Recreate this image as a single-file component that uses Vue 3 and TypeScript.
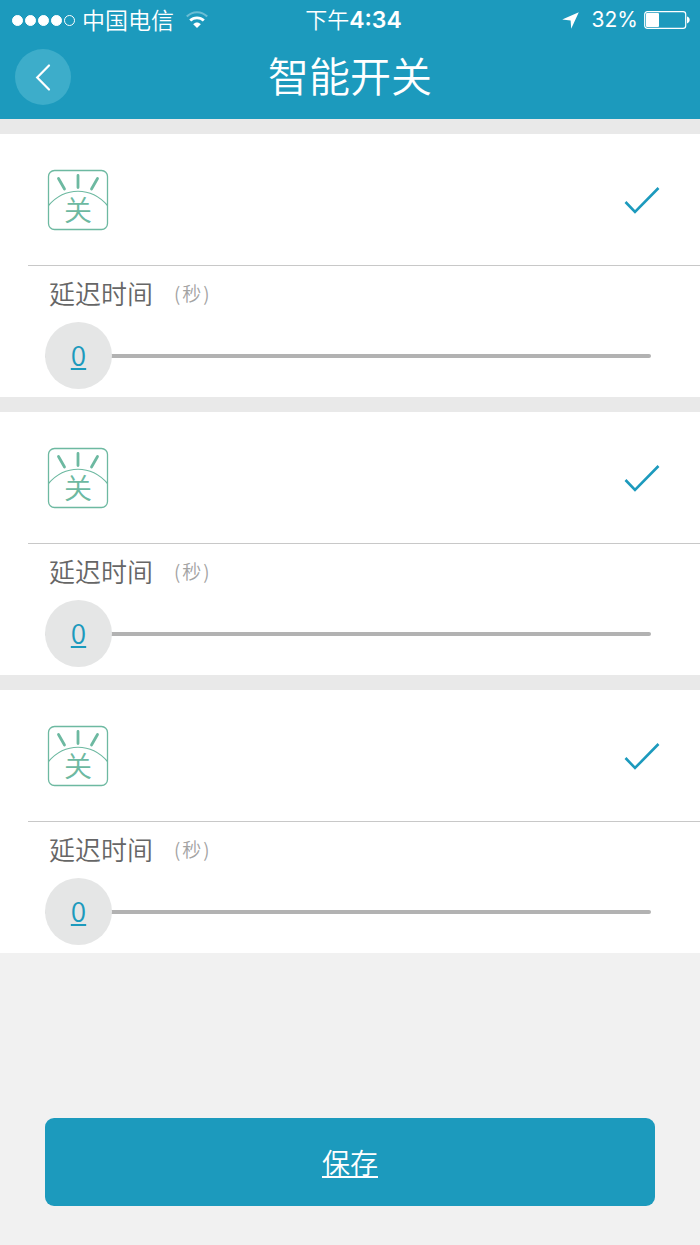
<script setup lang="ts">
import { ref } from 'vue'

interface SwitchItem {
  id: number
  selected: boolean
  delay: number
}

const MAX_DELAY = 60

const switches = ref<SwitchItem[]>([
  { id: 1, selected: true, delay: 0 },
  { id: 2, selected: true, delay: 0 },
  { id: 3, selected: true, delay: 0 },
])

const signal = [true, true, true, true, false]

function trackPosition(delay: number): string {
  const ratio = delay / MAX_DELAY
  return `calc((100% - 67px) * ${ratio})`
}
</script>

<template>
  <div class="page">
    <header class="header">
      <div class="status">
        <div class="status-left">
          <span class="signal">
            <i v-for="(on, i) in signal" :key="i" class="dot" :class="{ on }"></i>
          </span>
          <span class="carrier">中国电信</span>
          <svg class="wifi" width="22" height="18" viewBox="0 0 22 18" fill="none" aria-hidden="true">
            <path d="M.8 5.6C6.5-.2 15.5-.2 21.2 5.6" stroke="#fff" stroke-opacity=".35" stroke-width="2.2" />
            <path d="M4.2 9.6C8 5.9 14 5.9 17.8 9.6" stroke="#fff" stroke-width="2.8" />
            <path d="M11 17 7.2 13.2C9.3 10.9 12.7 10.9 14.8 13.2Z" fill="#fff" />
          </svg>
        </div>
        <div class="time">下午<b>4:34</b></div>
        <div class="status-right">
          <svg width="17" height="17" viewBox="0 0 17 17" aria-hidden="true">
            <path d="M16.8.2 9.2 16.8 8.6 8.6.2 7.6Z" fill="#fff" />
          </svg>
          <span class="percent">32%</span>
          <svg width="46" height="18" viewBox="0 0 46 18" fill="none" aria-hidden="true">
            <rect x=".7" y=".7" width="41" height="16.6" rx="2.6" stroke="#fff" stroke-width="1.2" />
            <rect x="2" y="2" width="13" height="14" rx="1" fill="#fff" />
            <path d="M43 5.6C46.6 6.6 46.6 11.4 43 12.4Z" fill="#fff" />
          </svg>
        </div>
      </div>
      <div class="titlebar">
        <button class="back" type="button" aria-label="返回">
          <svg width="56" height="56" viewBox="0 0 56 56" fill="none" aria-hidden="true">
            <path d="M34 16.5 22.2 28.5 34 40.5" stroke="#fff" stroke-width="2.2" stroke-linecap="round" />
          </svg>
        </button>
        <h1>智能开关</h1>
      </div>
    </header>

    <main class="list">
      <section v-for="item in switches" :key="item.id" class="card">
        <label class="switch-row">
          <svg class="switch-icon" width="62" height="62" viewBox="0 0 62 62" fill="none" stroke="#6db9a1" role="img" aria-label="开关">
            <rect x="1.5" y="1.5" width="59" height="59" rx="6" stroke-width="1.3" />
            <path d="M1.5 36.5C18 17.5 44 17.5 60.5 36.5" stroke-width="1.2" />
            <path d="M11.5 9.5 17.5 20M31 6.5V18.5M50.5 9.5 44.5 20" stroke-width="2.8" stroke-linecap="round" />
            <text class="switch-glyph" x="31" y="52" text-anchor="middle" fill="#6db9a1" stroke="none">关</text>
          </svg>
          <span class="tick">
            <input v-model="item.selected" type="checkbox" />
            <svg v-if="item.selected" width="36" height="30" viewBox="0 0 36 30" fill="none" aria-hidden="true">
              <path d="M1.5 17 11 27 34.5 3" stroke="#1c9abd" stroke-width="2.6" />
            </svg>
          </span>
        </label>
        <div class="delay">
          <label class="delay-label" :for="`delay-${item.id}`">
            延迟时间<small>(<span>秒</span>)</small>
          </label>
          <div class="slider">
            <input :id="`delay-${item.id}`" v-model.number="item.delay" type="range" min="0" :max="MAX_DELAY" />
            <output class="value" :for="`delay-${item.id}`" :style="{ left: trackPosition(item.delay) }">{{ item.delay }}</output>
          </div>
        </div>
      </section>
    </main>

    <footer class="footer">
      <button class="save" type="button">保存</button>
    </footer>
  </div>
</template>

<style>
body {
  background: #f1f1f1;
}
</style>

<style scoped>
* {
  box-sizing: border-box;
}

.page {
  display: flex;
  flex-direction: column;
  min-height: 100vh;
  background: #f1f1f1;
  font-family: "Noto Sans CJK SC", sans-serif;
  font-weight: 350;
}

.header {
  padding-bottom: 14px;
  background: #1c9abd;
  color: #fff;
}

.status {
  display: grid;
  grid-template-columns: 1fr auto 1fr;
  align-items: center;
  height: 38px;
  padding: 0 10px 0 12px;
  font-size: 22px;
  line-height: 36px;
}

.status-left,
.status-right {
  display: flex;
  align-items: center;
}

.status-right {
  justify-content: flex-end;
}

.signal {
  display: flex;
  gap: 2px;
}

.dot {
  width: 11px;
  height: 11px;
  border: 1px solid #fff;
  border-radius: 50%;
}

.dot.on {
  background: #fff;
}

.carrier {
  margin-left: 7px;
  padding-bottom: 2px;
  font-size: 23px;
}

.wifi {
  margin-left: 12px;
}

.time {
  padding: 0 0 2px 5px;
}

.time b {
  font-family: Inter, sans-serif;
  font-size: 23px;
  font-weight: 600;
}

.percent {
  margin: 0 6px 0 13px;
  font-family: Inter, sans-serif;
  font-size: 21px;
  font-weight: 400;
}

.titlebar {
  display: grid;
  grid-template-columns: 1fr auto 1fr;
  align-items: center;
  padding: 0 15px;
  height: 67px;
}

.back {
  width: 56px;
  height: 56px;
  margin-top: 11px;
  padding: 0;
  border: 0;
  border-radius: 50%;
  background: #3dadca;
}

.back svg {
  display: block;
}

h1 {
  margin: 4px 0 0;
  font-size: 41px;
  font-weight: 350;
  line-height: 60px;
}

.list {
  display: grid;
  gap: 15px;
  padding-top: 15px;
  background: #e9e9e9;
}

.card {
  background: #fff;
}

.switch-row {
  display: flex;
  align-items: center;
  justify-content: space-between;
  height: 132px;
  margin-left: 28px;
  padding: 0 40px 0 19px;
  border-bottom: 1px solid #c8c8c8;
}

.switch-glyph {
  font-family: "Noto Sans CJK SC", sans-serif;
  font-size: 28px;
  font-weight: 350;
}

.tick {
  display: grid;
}

.tick > * {
  grid-area: 1 / 1;
}

.tick input {
  width: 36px;
  height: 30px;
  margin: 0;
  appearance: none;
}

.delay {
  padding: 6px 49px 8px 45px;
}

.delay-label {
  display: flex;
  align-items: center;
  height: 40px;
  padding-left: 4px;
  color: #666;
  font-size: 26px;
}

.delay-label small {
  display: flex;
  gap: 2px;
  margin-left: 21px;
  color: #a3a3a3;
  font-size: 19px;
}

.slider {
  position: relative;
  height: 67px;
  margin-top: 10px;
}

.slider input {
  display: block;
  width: 100%;
  height: 67px;
  margin: 0;
  appearance: none;
  background: transparent;
}

.slider input::-webkit-slider-runnable-track {
  height: 4px;
  border-radius: 2px;
  background: #b2b2b2;
}

.slider input::-webkit-slider-thumb {
  width: 67px;
  height: 67px;
  margin-top: -32px;
  appearance: none;
  border-radius: 50%;
  background: #e5e6e6;
}

.value {
  position: absolute;
  top: 0;
  width: 67px;
  color: #1c9abd;
  font-size: 28px;
  line-height: 64px;
  text-align: center;
  text-decoration: underline;
  pointer-events: none;
}

.footer {
  margin-top: auto;
  padding: 39px 45px;
}

.save {
  display: block;
  width: 100%;
  height: 88px;
  border: 0;
  border-radius: 9px;
  background: #1c9abd;
  color: #fff;
  font-family: inherit;
  font-size: 28px;
  font-weight: 350;
  text-decoration: underline;
}
</style>
